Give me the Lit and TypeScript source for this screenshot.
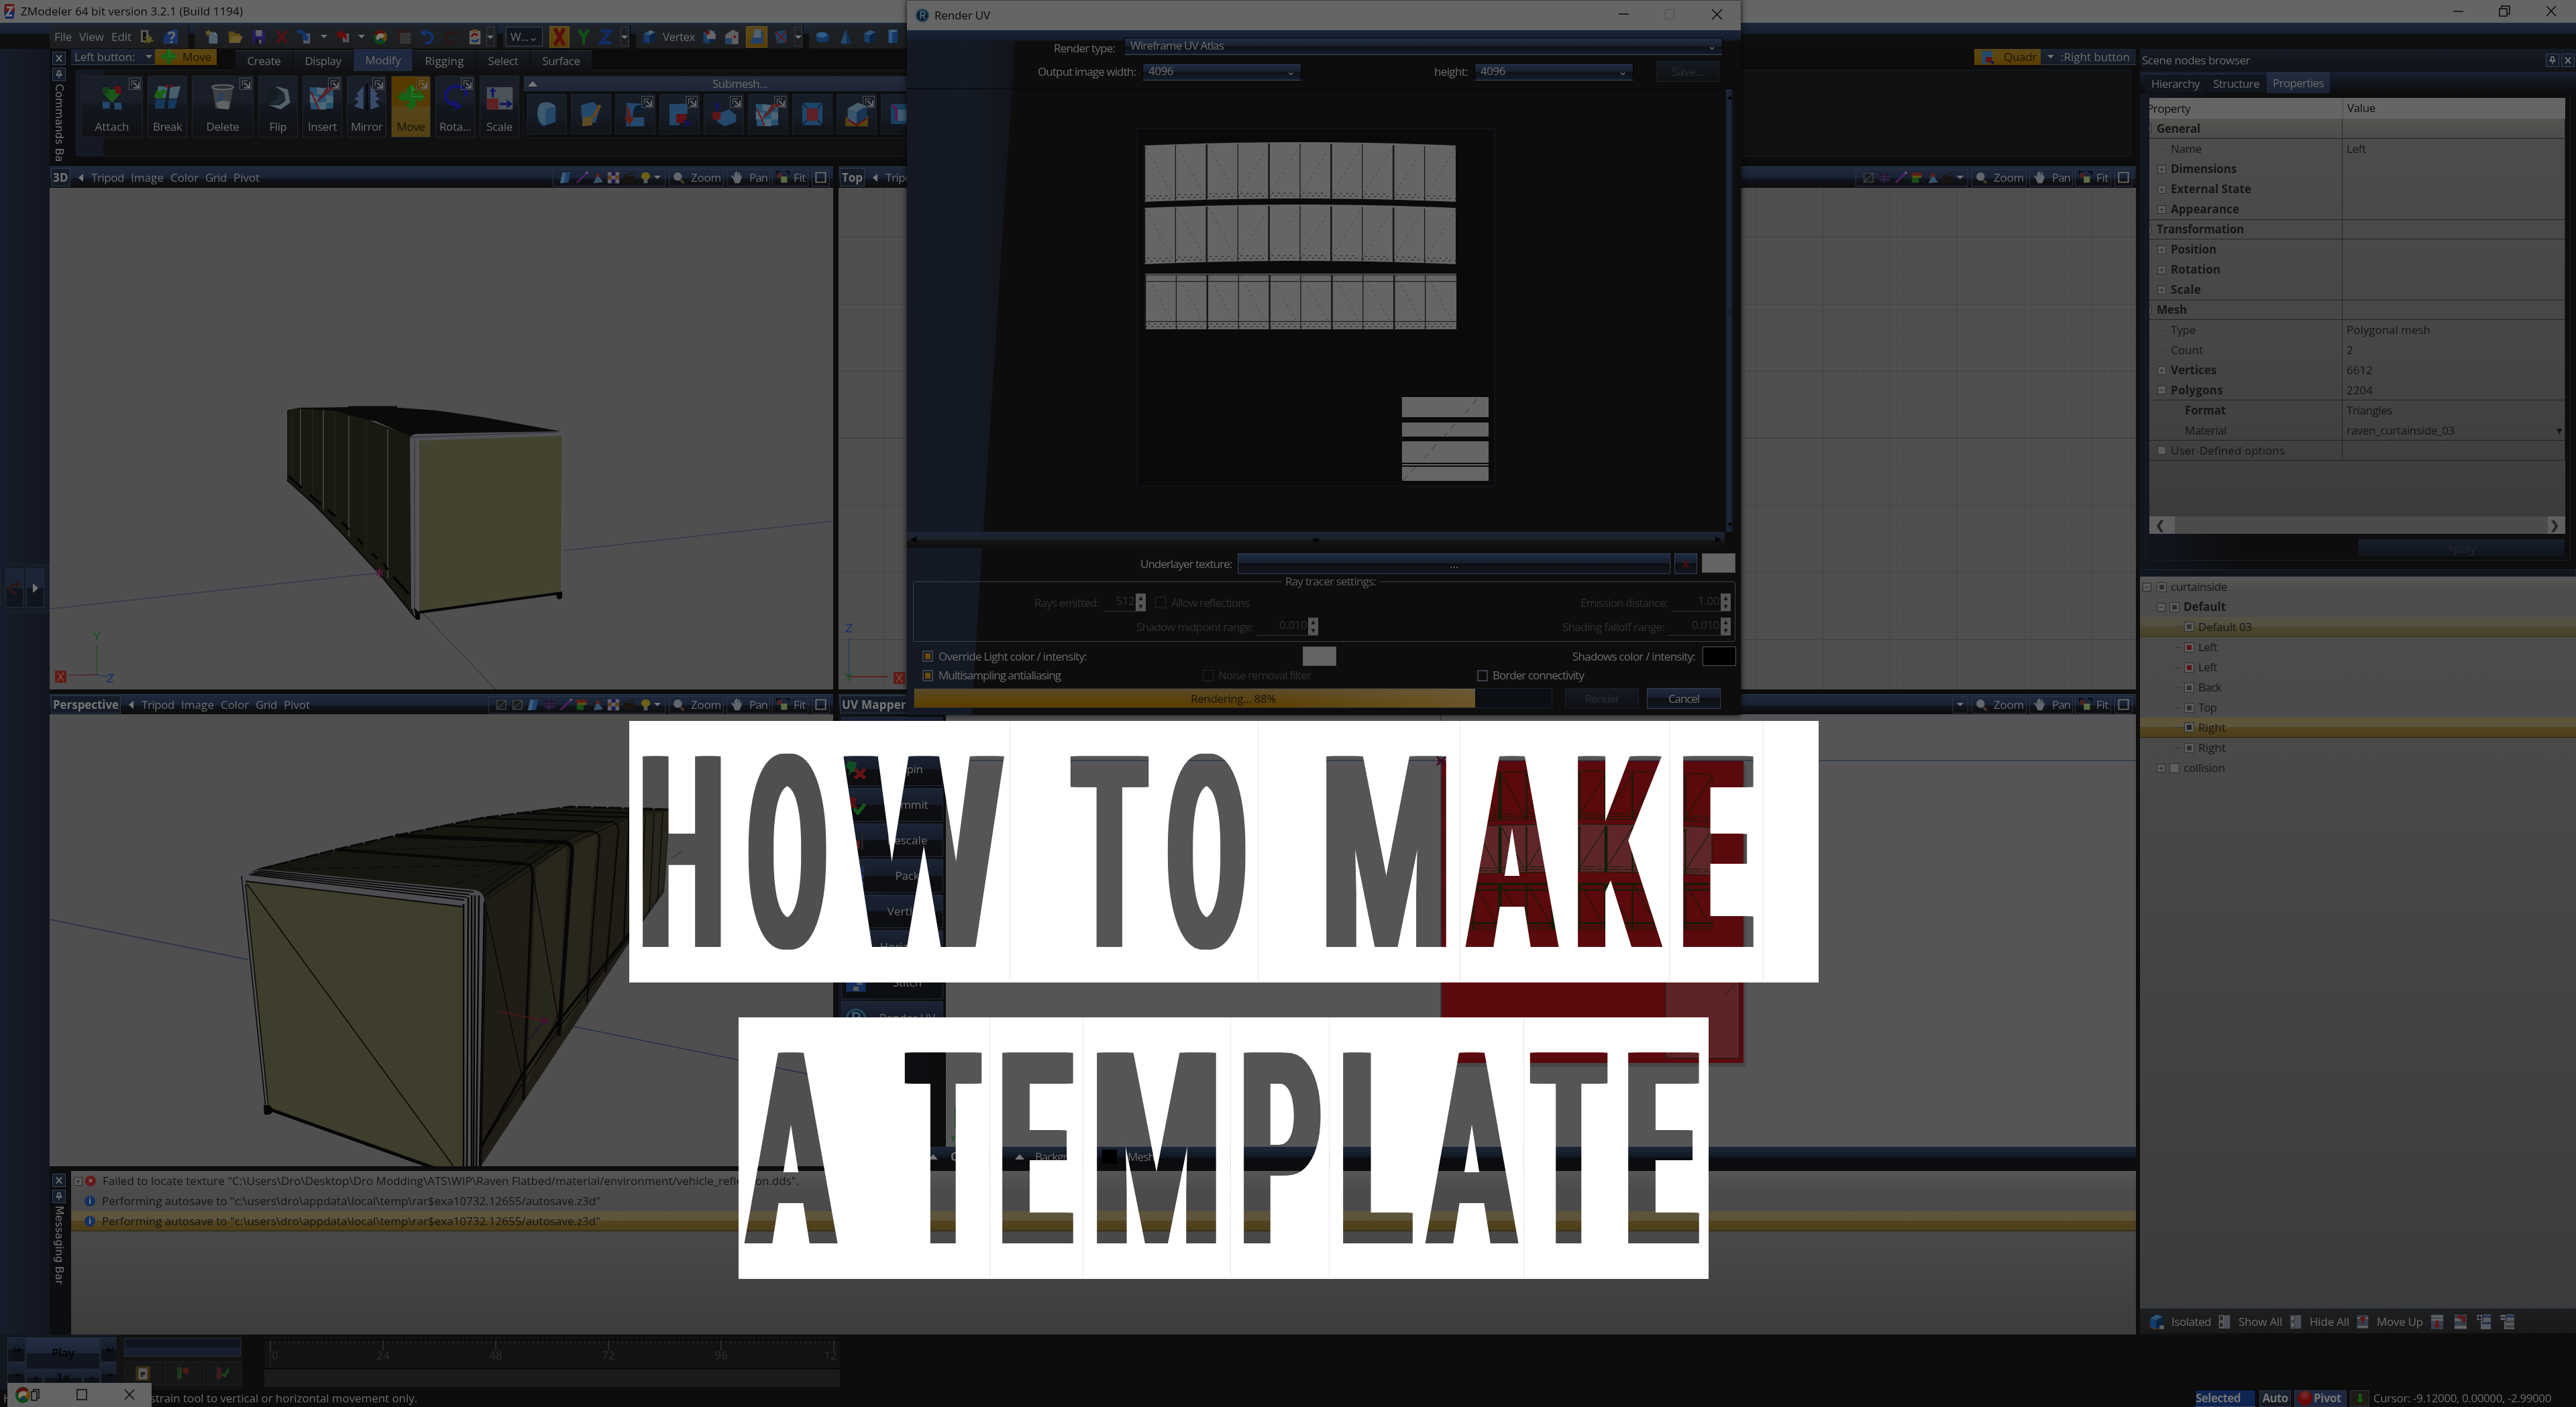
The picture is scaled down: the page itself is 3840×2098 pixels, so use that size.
import { LitElement, css, html, svg } from 'lit';
import { customElement, property } from 'lit/decorators.js';
import { classMap } from 'lit/directives/class-map.js';
import { styleMap } from 'lit/directives/style-map.js';

const ctx = document.createElement('canvas').getContext('2d')!;

// text tracked so that it fills exactly `width` pixels
const label = (text: string, width: number, size = 17, weight = 400) => {
  ctx.font = `${weight} ${size}px "Open Sans"`;
  const tracking = (width - ctx.measureText(text).width) / text.length;
  return html`<span class="t" style=${styleMap({
    width: `${width}px`,
    fontSize: `${size}px`,
    fontWeight: String(weight),
    letterSpacing: `${tracking.toFixed(3)}px`,
  })}>${text}</span>`;
};

const cube = (a = '#2c5375', b = '#193c63', c = '#0b2245') => svg`
  <path d="M4 7L13 2L21 5V17L12 22L4 19Z" fill=${b} />
  <path d="M4 7L13 2L21 5L12 10Z" fill=${a} />
  <path d="M12 10L21 5V17L12 22Z" fill=${c} />`;

const ICONS: Record<string, unknown> = {
  exit: svg`<path d="M3 2H14V20H3Z" fill="#5b5a52" /><path d="M6 5L11 4V19L6 17Z" fill="#111" /><path d="M9 13L21 18M20 12L9 21M15 9V22M7 18H22" stroke="#56501a" stroke-width="2.2" /><circle cx="15" cy="16" r="4" fill="#5c5620" />`,
  help: svg`<path d="M2 22C-1 10 8 1 22 2V22Z" fill="#1a3268" /><path d="M9 9C9 5 17 5 17 9C17 13 13 12 13 16" fill="none" stroke="#6a6a6a" stroke-width="3" /><circle cx="13" cy="20" r="1.800" fill="#6a6a6a" />`,
  new: svg`<path d="M7 5H17L21 9V22H7Z" fill="#4e5f6e" /><path d="M17 5V9H21Z" fill="#7a7f84" /><path d="M6 0L7.500 4L12 4L8.500 7L10 11L6 9L2 11L3.500 7L0 4L4.500 4Z" fill="#665a20" />`,
  open: svg`<path d="M1 4H9L11 7H20V20H1Z" fill="#5c4a18" /><path d="M6 11H24L19 21H2Z" fill="#6a5a2c" />`,
  save: svg`<path d="M2 2H20L22 4V22H2Z" fill="#241b60" /><path d="M7 2H17V11H7Z" fill="#606068" /><path d="M6 15H17V22H6Z" fill="#14131f" /><path d="M12 16H16V22H12Z" fill="#5a5a62" />`,
  cross: svg`<path d="M4 3L20 21M20 3L4 21" stroke="#5a1013" stroke-width="3.5" />`,
  import: svg`<path d="M10 7H21V22H10Z" fill="#4e5a66" /><path d="M0 2C8 1 14 4 16 11L19 10L17 18L8 16L11 13C9 9 6 7 0 6Z" fill="#10356c" />`,
  export: svg`<path d="M12 7H22V20H12Z" fill="#54595f" /><path d="M0 8L11 1V5C18 5 20 10 18 19C16 14 14 12 11 12V16Z" fill="#660c0c" />`,
  ball: svg`<circle cx="12" cy="12" r="11" fill="#0c4a16" /><path d="M12 12L2 8A11 11 0 0 1 20 5Z" fill="#5a0d0d" /><path d="M12 12L20 5A11 11 0 0 1 20 19Z" fill="#6b4510" /><path d="M6 11C6 6 18 5 18 10C18 15 8 12 9 17C4 16 5 13 6 11Z" fill="#85796a" /><circle cx="12" cy="17" r="2.500" fill="#162f65" />`,
  film: svg`<path d="M2 2H16V16H2Z" fill="#311916" /><path d="M6 6H23V22H6Z" fill="#3d3d3d" /><path d="M9 6V22M13 6V22M17 6V22M21 6V22M6 10H23M6 14H23M6 18H23" stroke="#2b2b2b" />`,
  undo: svg`<path d="M5 6C15 3 22 9 20 15C18 21 12 22 8 21" fill="none" stroke="#12326c" stroke-width="4" /><path d="M0 6L10 0V12Z" fill="#12326c" />`,
  redo: svg`<path d="M19 6C9 3 2 9 4 15C6 21 12 22 16 21" fill="none" stroke="#2b1616" stroke-width="4" /><path d="M24 6L14 0V12Z" fill="#2b1616" />`,
  reload: svg`<path d="M3 3H21V23H3Z" fill="#64615a" /><path d="M7 1H17V5H7Z" fill="#5f4a1e" /><path d="M7 12C7 7 14 7 17 10" fill="none" stroke="#650f0f" stroke-width="3" /><path d="M17 15C17 20 10 19 7 17" fill="none" stroke="#12326c" stroke-width="3" />`,
  axisX: svg`<path d="M5 2L19 22M19 2L5 22" stroke="#5c0d0d" stroke-width="5" />`,
  axisY: svg`<path d="M4 2L12 12L20 2M12 12V23" fill="none" stroke="#0e5414" stroke-width="4.5" />`,
  axisZ: svg`<path d="M5 4H19L5 20H20" fill="none" stroke="#0f2d66" stroke-width="4.5" />`,
  vert: svg`${cube()}<path d="M2 14L9 20L2 23Z" fill="#0f2a61" /><circle cx="14" cy="5" r="2.5" fill="#676767" />`,
  vertR: svg`${cube()}<path d="M9 8L15 3L21 8V15H9Z" fill="#666" /><circle cx="10" cy="6" r="3" fill="#601414" />`,
  vertW: svg`<path d="M3 9L13 2L21 6V22H3Z" fill="#606063" /><path d="M3 14H12V22H3Z" fill="#1e3f66" /><circle cx="16" cy="12" r="2" fill="#601414" />`,
  vertA: svg`<path d="M9 3H18L21 8V20H3Z" fill="#203e68" /><path d="M9 3H18V13H7Z" fill="#54606b" />`,
  vertS: svg`<path d="M3 4L20 2L21 20L6 22Z" fill="#1c4061" /><path d="M4 4L20 20M20 3L6 21" stroke="#611414" stroke-width="2" />`,
  disc: svg`<rect x="2" y="5" width="20" height="15" rx="6" fill="#133561" /><ellipse cx="11" cy="9" rx="8" ry="4" fill="#315a84" />`,
  cone: svg`<path d="M12 1L20 21Q12 24 4 21Z" fill="#24496f" /><path d="M12 1L20 21Q16 23 13 22Z" fill="#102f56" />`,
  cube: cube(),
  cylinder: svg`<path d="M5 3H19V21H5Z" fill="#143665" /><path d="M6 3H11V21H6Z" fill="#2d567e" /><ellipse cx="12" cy="3" rx="7" ry="2" fill="#41617e" />`,
  attach: svg`<path d="M3 1H8M16 1H21V6M3 23H8M16 23H21V18" fill="none" stroke="#131b28" stroke-width="2" /><path d="M4 3H10V9H4Z" fill="#184018" /><path d="M14 2H20V9H14Z" fill="#611014" /><path d="M4 16H10V22H4ZM14 17H20V23H14Z" fill="#24486a" /><path d="M12 17L5 9H9V5H15V9H19Z" fill="#1a571a" />`,
  break: svg`<path d="M4 2L12 3L10 13H2Z" fill="#416272" /><path d="M2 14H10L9 22H1Z" fill="#153a5e" /><path d="M14 3L23 2L20 13H13Z" fill="#48606c" /><path d="M13 14H20L18 22H12Z" fill="#153a5e" /><path d="M10 1L12 3M14 3L16 1" stroke="#701010" stroke-width="2" /><path d="M0 12L3 5L5 7L9 4L11 7L8 10L9 13Z" fill="#1c6114" />`,
  bin: svg`<path d="M3 2H21L18 22H6Z" fill="#3d4145" /><ellipse cx="12" cy="3" rx="9" ry="2" fill="#2b2e31" stroke="#66696c" /><path d="M6 17L12 15L18 16L17 23L8 22Z" fill="#626364" /><path d="M9 9L12 11M8 14L12 13" stroke="#1a3f70" stroke-width="2" />`,
  flip: svg`<path d="M1 7L9 2L13 10L12 16L3 18Z" fill="#151c22" /><path d="M9 2L20 5L22 17L14 23L4 19L13 19L18 15L17 8Z" fill="#53616b" /><path d="M12 10L17 9L17 14L12 18L3 18L11 14Z" fill="#1d2933" />`,
  insert: svg`<path d="M1 3L21 4V22L2 23Z" fill="#27526f" /><path d="M7 3L14 4V10L7 9ZM1 10L8 11V17H1ZM15 10L21 11V17H15ZM8 17L15 16V23H8Z" fill="#4b6676" /><path d="M2 7L9 23" stroke="#701216" stroke-width="1.200" /><path d="M6 17L16 3L23 3L10 14Z" fill="#651518" /><path d="M11 11L19 4" stroke="#3a3a3a" />`,
  mirror: svg`<path d="M9 2V23L1 20L5 16L1 13L5 11L3 9Z" fill="#394a6a" /><path d="M15 2V23L23 20L19 16L23 13L19 11L21 9Z" fill="#394a6a" /><path d="M12 0V24" stroke="#0a0a14" stroke-width="2" />`,
  move: svg`<path d="M12 0L17 6H14V8H18V5L24 12L18 17V14H16V18H17L12 24L7 18H10V15H6V17L0 12L6 6V9H8V6H7Z" fill="#176018" /><path d="M12 1L16 6H13V11H22L24 12H12Z" fill="#287a2a" />`,
  rotate: svg`<path d="M21 11C22 2 12 0 7 4C1 9 3 17 11 19" fill="none" stroke="#14146a" stroke-width="3" /><path d="M10 14L18 20L11 24L12 20L8 19Z" fill="#14146a" />`,
  scale: svg`<path d="M1 3H23V23H1Z" fill="#4b535a" /><path d="M1 13H11V23H1Z" fill="#5f2325" /><path d="M5 12V7H3L6 3L9 7H7V12M12 17H18V14L23 18L18 22V19H12" fill="#101761" />`,
  blob: svg`<path d="M6 3C12 0 17 2 20 5V19L9 23C3 20 2 9 6 3Z" fill="#24486a" /><path d="M6 3C12 0 17 2 20 5L11 8V22C4 19 2 9 6 3Z" fill="#3d596c" />`,
  brush: svg`<path d="M3 4L14 1L20 7L16 20L4 18Z" fill="#24486a" /><path d="M20 4L14 15" stroke="#5f4520" stroke-width="3" /><path d="M5 15L14 14L13 22L4 23Z" fill="#5e4c24" />`,
  detach: svg`<path d="M4 2L20 3V10H10V15H20V23H4Z" fill="#24486a" /><path d="M10 10L20 10V3L12 5Z" fill="#0d1c2c" /><path d="M4 3C8 10 8 12 8 15H11L7 22L2 15H5Z" fill="#601d14" />`,
  extrude: svg`<path d="M3 3H19V12H12V22H3Z" fill="#24486a" /><path d="M9 12H18V20H9Z" fill="#601014" /><path d="M15 17L22 19L19 24Z" fill="#11155c" />`,
  raise: svg`<path d="M6 12L17 8L23 13V19L13 23L6 19Z" fill="#24486a" /><path d="M2 10H9V17H2Z" fill="#601418" /><path d="M5 10V6H3L6 1L9 6H7V10Z" fill="#12165e" />`,
  frame: svg`<path d="M3 2H21V22H3Z" fill="#1c4669" /><path d="M3 2L21 22M21 2L3 22" stroke="#0c1d33" /><path d="M7 7H17V18H7Z" fill="#602025" />`,
  soil: svg`<path d="M2 14L10 20L22 13V23H2Z" fill="#594411" />${cube('#48606e', '#3a556a', '#173557')}<path d="M4 17L12 22L21 16" fill="none" stroke="#601010" stroke-width="1.5" />`,
  isolate: svg`<path d="M2 19L12 16L22 20L10 23Z" fill="#5a3414" />${cube('#2c5375', '#123c70', '#0b2245')}<path d="M17 17H23V22H17Z" fill="#626262" />`,
  link: svg`<path d="M3 3H21V21H3Z" fill="#174060" /><path d="M8 8H23V18H8Z" fill="#3e5d70" /><path d="M4 4L8 8V18" fill="none" stroke="#601048" stroke-width="2" />`,
  face: svg`<path d="M8 3L20 2L17 21L4 22Z" fill="#1d4470" /><path d="M8 3L13 3L10 21L4 22Z" fill="#415f7c" />`,
  edge: svg`<path d="M21 3L5 21" stroke="#57206a" stroke-width="3" /><circle cx="21" cy="3" r="2" fill="#6b5a6b" />`,
  spray: svg`<path d="M12 6L21 20L6 22Z" fill="#35536e" /><path d="M12 2L17 9L8 12Z" fill="#61201c" />`,
  checker: svg`<path d="M3 2H21V22H3Z" fill="#5b3d16" /><path d="M3 2H9V8H3ZM15 2H21V8H15ZM9 8H15V15H9ZM3 15H9V22H3ZM15 15H21V22H15Z" fill="#606070" /><path d="M9 2H15V8H9ZM9 15H15V22H9Z" fill="#191555" />`,
  clap: svg`<path d="M3 9H20V21H3Z" fill="#19140f" /><path d="M3 8L19 3" stroke="#1f1a14" stroke-width="3" />`,
  bulb: svg`<circle cx="12" cy="9" r="7" fill="#6b6014" /><path d="M9 15H15V22H9Z" fill="#5a5a5a" />`,
  wire: svg`<path d="M6 4H20V20H6ZM6 20L20 4" fill="#171a1f" stroke="#454545" stroke-width="1.5" />`,
  purple: svg`<path d="M5 5L14 2L21 6V18L11 22L5 18Z" fill="#221530" /><path d="M5 10H21M5 15H21M12 3V21" stroke="#40305a" />`,
  heat: svg`<path d="M4 3H21V8H4Z" fill="#601c12" /><path d="M6 8H20V12H6Z" fill="#5f5312" /><path d="M5 12H16V21H5Z" fill="#184f18" />`,
  page: svg`<path d="M2 2H22V22H2Z" fill="#3a2c10" /><path d="M6 5H18V20H6Z" fill="#5c5c5c" /><path d="M9 10H15V14H12V17H9Z" fill="#202020" />`,
  keyAdd: svg`<path d="M4 3H11V20H4Z" fill="#1a3a1a" /><path d="M6 0V24" stroke="#2c2c2c" /><circle cx="17" cy="8" r="5" fill="#4c1a12" />`,
  keyOk: svg`<path d="M4 3H11V20H4Z" fill="#40191a" /><path d="M6 0V24" stroke="#2c2c2c" /><path d="M12 12L16 16L22 5" fill="none" stroke="#174a1a" stroke-width="3" />`,
  zoom: svg`<circle cx="10" cy="10" r="7.5" fill="#62676c" /><path d="M15 16L21 22" stroke="#4a3a28" stroke-width="4" />`,
  hand: svg`<path d="M6 14L2 9L5 8L8 11V3H11V9V1H14V9L16 2L18 3V10L21 6V13L17 22H9Z" fill="#60666b" />`,
  fit: svg`<path d="M2 7V2H8M16 2H22V7M2 17V22" fill="none" stroke="#070707" stroke-width="2" /><path d="M3 5H11V12H3Z" fill="#50201e" /><path d="M9 10H19V20H9Z" fill="#5e6e45" />`,
  max: svg`<path d="M3 3H21V21H3Z" fill="none" stroke="#6a6a6a" stroke-width="2.5" />`,
  pin: svg`<path d="M9 3H15V11H18V14H6V11H9ZM12 14V22" fill="none" stroke="#777" stroke-width="2.5" />`,
  x: svg`<path d="M5 4L19 20M19 4L5 20" stroke="#777" stroke-width="3" />`,
  listUp: svg`<path d="M3 1H21V23H3Z" fill="#343f4e" /><path d="M3 6H21M3 20H21" stroke="#646464" stroke-width="3" /><path d="M12 2L18 8H14V14H10V8H6Z" fill="#621318" />`,
  listDn: svg`<path d="M3 1H21V23H3Z" fill="#343f4e" /><path d="M3 4H21M3 9H21" stroke="#646464" stroke-width="3" /><path d="M12 22L18 16H14V10H10V16H6Z" fill="#621318" />`,
  listIn: svg`<path d="M3 1H21V23H3Z" fill="#343f4e" /><path d="M3 20H21M3 9H12" stroke="#646464" stroke-width="4" /><path d="M6 4L12 1V3H19V14H15V7H12V9Z" fill="#621318" />`,
  listPl: svg`<path d="M7 1H22V23H7Z" fill="#545b63" /><path d="M9 4H22M9 14H22" stroke="#1b2c4c" stroke-width="3" /><path d="M1 1H10V10H1Z" fill="#666" stroke="#111" /><path d="M5.500 2.500V8.500M2.500 5.500H8.500" stroke="#113" stroke-width="2" />`,
  listMi: svg`<path d="M7 1H22V23H7Z" fill="#545b63" /><path d="M9 4H22" stroke="#1b2c4c" stroke-width="3" /><path d="M9 12H22M9 19H22" stroke="#3c3c3c" stroke-width="3" /><path d="M1 1H10V10H1Z" fill="#666" stroke="#111" /><path d="M2.500 5.500H8.500" stroke="#113" stroke-width="2" />`,
  show: svg`<path d="M3 1H21V23H3Z" fill="#4b5058" /><path d="M4 2H10V10H4ZM4 13H10V21H4Z" fill="#222" stroke="#777" />`,
  hide: svg`<path d="M3 1H21V23H3Z" fill="#4b5058" /><path d="M4 2H10V10H4ZM4 13H10V21H4Z" fill="#686868" stroke="#222" />`,
  pinX: svg`<path d="M3 2L13 4L11 12L15 16L7 15L3 21L5 13L1 9Z" fill="#0f4f26" /><path d="M11 12L22 23M22 12L11 23" stroke="#671313" stroke-width="4" />`,
  pinV: svg`<path d="M3 2L13 4L11 12L15 16L7 15L3 21L5 13L1 9Z" fill="#5c1015" /><path d="M10 16L14 22L22 11" fill="none" stroke="#17561a" stroke-width="4" />`,
  rule: svg`<path d="M2 12H16V22H2Z" fill="#571b1b" /><path d="M19 1V23" stroke="#262626" stroke-width="2" />`,
  stack: svg`<path d="M13 1H21V8H13ZM13 10H21V16H13ZM13 18H21V23H13Z" fill="#1b2c58" /><path d="M3 10H11V16H3Z" fill="#1b2c58" />`,
  grid: svg`<path d="M1 1H23V23H1Z" fill="#132d5c" /><path d="M9 3H15V8H9ZM13 10H19V15H13ZM9 17H15V22H9Z" fill="#575757" />`,
  ruv: svg`<circle cx="12" cy="12" r="10" fill="#0c1824" stroke="#26485e" stroke-width="2.5" /><path d="M9 18V6H13C17 6 17 12 13 12H9M13 12L16 18" fill="none" stroke="#3e5d70" stroke-width="2.5" />`,
  none: svg``,
};

const icon = (name: string, w = 24, h = w) => html`
  <svg class="icon" width=${w} height=${h} viewBox="0 0 24 24" preserveAspectRatio="none">${ICONS[name]}</svg>`;

const range = (n: number) => Array.from({length: n}, (_, i) => i);

// one unwrapped curtain: panels side by side with a small bow along the top
const uvStrip = (x: number, y: number, w: number, h: number, bow: number, fill: string, line: string, lw = 1) => {
  const top = (t: number) => y + bow * (2 * t - 1) ** 2;
  const pts = range(21).map(i => `${x + w * i / 20},${top(i / 20)}`);
  const back = range(21).reverse().map(i => `${x + w * i / 20},${top(i / 20) + h}`);
  return svg`
    <polygon points="${[...pts, ...back].join(' ')}" fill=${fill} stroke=${lw > 1 ? line : 'none'} />
    ${range(10).map(i => {
      const x0 = x + w * i / 10;
      const x1 = x0 + w / 10;
      const y0 = top((i + 0.5) / 10);
      const flip = bow && i > 2;
      return svg`
        <path d="M${x0} ${y0 + 2}V${y0 + h}" stroke=${line} stroke-width=${(i % 2 ? 1.2 : 2.5) * lw} />
        <path d="M${flip ? x1 : x0 + 3} ${y0 + 4}L${flip ? x0 : x1 - 3} ${y0 + h - 6}" stroke=${line} stroke-width=${0.6 * lw} stroke-dasharray=${lw > 1 ? 'none' : '2 6'} />
        <path d="M${x0} ${y0 + h - 4}H${x1}M${x0 + 4} ${y0 + h - 8}H${x1 - 6}" stroke=${line} stroke-dasharray=${lw > 1 ? '22 3' : '3 6'} />`;
    })}
    ${bow ? svg`` : svg`<path d="M${x} ${y + h * 0.14}H${x + w}M${x} ${y + h * 0.86}H${x + w}M${x} ${y + 2}H${x + w}" stroke=${line} stroke-width=${lw > 1 ? 2 : 1} />`}`;
};

type Glyph = [string, number, number];

// big cut-out caption, [letter, left, right] measured from the plate's left edge
@customElement('zm-caption')
export class Caption extends LitElement {
  static styles = css`
    :host {
      display: block;
      height: 390px;
      background-color: #fff;
      mix-blend-mode: screen;
      overflow: hidden;
      position: relative;
    }
    .line {
      margin: 0;
      display: flex;
      height: 390px;
      color: #000;
      font: 700 400px/400px Roboto, sans-serif;
      white-space: pre;
    }
    .cell {
      height: 390px;
      flex: none;
    }
    .glyph {
      display: block;
      width: 0;
      transform-origin: 0 0;
    }
    .seam {
      position: absolute;
      top: 0;
      width: 1px;
      height: 388px;
      background-color: #dcdcdc;
    }
  `;

  @property({attribute: false})
  glyphs: Glyph[] = [];

  @property({attribute: false})
  seams: number[] = [];

  glyph([ch, left, right]: Glyph, i: number) {
    const next = this.glyphs[i + 1];
    const start = i ? left : 0;
    const width = (next ? next[1] : right) - start;
    ctx.font = '700 400px Roboto';
    const m = ctx.measureText(ch);
    const fat = 6;
    const ink = m.actualBoundingBoxRight + m.actualBoundingBoxLeft;
    const k = (right - left - fat * 2) / ink;
    const dx = left - start + fat + m.actualBoundingBoxLeft * k;
    const s = fat / k;
    return html`<span class="cell" style=${styleMap({width: `${width}px`})}><span class="glyph" style=${styleMap({
      transform: `translate(${dx}px, 1px) scaleX(${k})`,
      textShadow: `${s}px 0 #000, ${-s}px 0 #000, ${s / 2}px 0 #000, ${-s / 2}px 0 #000`,
    })}>${ch}</span></span>`;
  }

  render() {
    return html`
      <h1 class="line">${this.glyphs.map((g, i) => this.glyph(g, i))}</h1>
      ${this.seams.map(x => html`<i class="seam" style=${styleMap({left: `${x}px`})}></i>`)}
    `;
  }
}

const LINE1: Glyph[] = [
  ['H', 20, 139], ['O', 176, 295], ['W', 319, 559], ['T', 657, 776], ['O', 801, 920],
  ['M', 1039, 1218], ['A', 1246, 1386], ['K', 1414, 1543], ['E', 1571, 1677],
];
const LINE2: Glyph[] = [
  ['A', 8, 148], ['T', 247, 364], ['E', 393, 500], ['M', 534, 712], ['P', 753, 868],
  ['L', 901, 1007], ['A', 1023, 1163], ['T', 1179, 1297], ['E', 1326, 1433],
];

const MAIN_ICONS: [string, number][] = [
  ['new', 35], ['open', 35], ['save', 35], ['cross', 34], ['import', 34], ['drop', 23], ['export', 34], ['drop', 22],
  ['ball', 34], ['film', 35], ['undo', 35], ['redo', 36], ['reload', 35],
];

const TABS: [string, number, number][] = [
  ['Create', 86, 50], ['Display', 90, 54], ['Modify', 89, 53], ['Rigging', 94, 58], ['Select', 81, 45], ['Surface', 92, 56],
];

const COMMANDS: [string, string, number, number, boolean][] = [
  ['Attach', 'attach', 92, 51, true], ['Break', 'break', 59, 43, false], ['Delete', 'bin', 92, 49, true],
  ['Flip', 'flip', 59, 26, false], ['Insert', 'insert', 59, 43, true], ['Mirror', 'mirror', 59, 47, true],
  ['Move', 'move', 59, 42, true], ['Rota...', 'rotate', 59, 47, true], ['Scale', 'scale', 59, 39, false],
];

const SUBMESH: [string, boolean][] = [
  ['blob', false], ['brush', false], ['detach', true], ['extrude', true], ['raise', true], ['insert', true],
  ['frame', false], ['soil', true], ['link', false],
];

// name, value, kind, indent, name width, value width
const PROPS: [string, string, string, number, number, number][] = [
  ['General', '', 'group', 0, 65, 0],
  ['Name', 'Left', '', 1, 46, 29],
  ['Dimensions', '', 'plus', 1, 98, 0],
  ['External State', '', 'plus', 1, 120, 0],
  ['Appearance', '', 'plus', 1, 102, 0],
  ['Transformation', '', 'group', 0, 130, 0],
  ['Position', '', 'plus', 1, 68, 0],
  ['Rotation', '', 'plus', 1, 74, 0],
  ['Scale', '', 'plus', 1, 45, 0],
  ['Mesh', '', 'group', 0, 45, 0],
  ['Type', 'Polygonal mesh', '', 1, 37, 125],
  ['Count', '2', '', 1, 48, 9],
  ['Vertices', '6612', 'plus', 1, 68, 39],
  ['Polygons', '2204', 'minus', 1, 78, 39],
  ['Format', 'Triangles', 'bold', 2, 61, 68],
  ['Material', 'raven_curtainside_03', 'last', 2, 62, 161],
  ['User-Defined options', '', 'check', 1, 170, 0],
];

// name, width, depth, expander, box colour, row state
const TREE: [string, number, number, string, string, string][] = [
  ['curtainside', 84, 0, '−', '#2e2e2e', ''],
  ['Default', 63, 1, '−', '#2e2e2e', 'bold'],
  ['Default 03', 80, 2, '', '#33332a', 'soft'],
  ['Left', 28, 2, '', '#591114', ''],
  ['Left', 28, 2, '', '#591114', ''],
  ['Back', 34, 2, '', '#2e2e2e', ''],
  ['Top', 27, 2, '', '#2e2e2e', ''],
  ['Right', 41, 2, '', '#1f1f26', 'hot'],
  ['Right', 41, 2, '', '#2e2e2e', ''],
  ['collision', 62, 1, '+', '#606060', ''],
];

const MAPPER: [string, string, number][] = [
  ['Pin', 'pinV', 26], ['Unpin', 'pinX', 46], ['Commit', 'pinV', 62], ['Rescale', 'rule', 60], ['Pack', 'stack', 36],
  ['Vertical', 'none', 60], ['Horizontal', 'none', 82], ['Stitch', 'grid', 43], ['Render UV', 'ruv', 83],
];

@customElement('app-root')
export class AppRoot extends LitElement {
  static styles = css`
    :host {
      display: block;
      width: 3840px;
      height: 2098px;
      overflow: hidden;
      position: relative;
      isolation: isolate;
      background-color: #0d0d0d;
      color: #6c6c6c;
      font: 17px/22px "Open Sans", "Noto Sans", sans-serif;
    }
    * { box-sizing: border-box; }
    i { font-style: normal; }
    .t { display: inline-block; white-space: pre; flex: none; }
    .icon { display: block; flex: none; }
    .row { display: flex; align-items: center; gap: 10px; }
    .grow { flex: 1; }
    .drop {
      width: 0;
      height: 0;
      flex: none;
      border: 5px solid transparent;
      border-top-color: #777;
      border-bottom: 0;
    }
    .drop.left { border: 6px solid transparent; border-right: 7px solid #777; border-left: 0; }
    .drop.up { border: 7px solid transparent; border-bottom: 8px solid #777; border-top: 0; }

    .titlebar {
      display: flex;
      align-items: center;
      height: 34px;
      background-color: #656565;
      color: #0a0a0a;
    }
    .logo { margin: 0 8px 0 5px; }
    .winbtns { margin: -2px 28px 0 auto; }

    .toolbar {
      display: flex;
      height: 39px;
      padding: 3px 0 1px 74px;
      background: linear-gradient(#1b2839, #151e2c 16px, #0f0f10 17px);
    }
    .group {
      display: flex;
      align-items: center;
      height: 35px;
      padding-left: 8px;
      margin-right: 8px;
      background: linear-gradient(#1d222a, #1c1c1d);
      border-right: 1px solid #090909;
    }
    .group.menus { width: 208px; gap: 11px; padding-left: 7px; }
    .group.tools { width: 452px; }
    .group.axes { width: 190px; gap: 10px; padding-left: 4px; }
    .group.verts { width: 250px; gap: 8px; }
    .group.prims { width: 400px; gap: 11px; }
    .tool { display: flex; justify-content: center; flex: none; }
    .gold { background: linear-gradient(#5a4516, #5e450b 50%, #583c00); border: 1px solid #6a5526; }
    .gold .icon { margin: 0 2px; }
    .more { width: 12px; height: 29px; border: 1px solid #33373e; margin-left: auto; margin-right: 4px; padding-top: 18px; }
    .wsel {
      display: flex;
      align-items: center;
      justify-content: space-between;
      width: 60px;
      height: 29px;
      padding: 0 6px;
      background: #10151e;
      border: 1px solid #3c4350;
    }

    .main { display: flex; height: 1917px; }
    .side {
      width: 74px;
      background: linear-gradient(90deg, #161c29, #121620);
      padding-top: 768px;
    }
    .sidebtn {
      display: flex;
      gap: 4px;
      height: 72px;
      padding: 6px 7px;
      background-color: #151b27;
      border: 1px solid #1c2330;
    }
    .sidebtn div { flex: 1; display: flex; align-items: center; justify-content: center; border: 1px solid #232c3b; background: linear-gradient(#1a2434 49%, #10141d 50%); }
    .play { width: 0; height: 0; border: 7px solid transparent; border-left: 8px solid #777; border-right: 0; }
    .center { width: 3110px; margin-right: 6px; background-color: #0c0c0d; }

    .commands { display: flex; height: 175px; }
    .strip { width: 32px; padding: 4px 4px 0; background-color: #0c0d10; }
    .mini { display: flex; align-items: center; justify-content: center; width: 20px; height: 20px; margin-bottom: 4px; border: 1px solid #3a4251; background-color: #151d2b; }
    .vtext { writing-mode: vertical-rl; margin: 4px 0 0 -1px; font: 16px/22px "DejaVu Sans", sans-serif; color: #747474; white-space: pre; }
    .cmdbody { flex: 1; }
    .cmdtop { display: flex; height: 31px; }
    .bind { display: flex; align-items: center; gap: 16px; height: 24px; padding-left: 5px; background: linear-gradient(#1a2332, #151c29); border-bottom: 1px solid #39414e; }
    .bind .gold { display: flex; align-items: center; gap: 6px; height: 24px; padding: 0 6px; color: #16130c; border: 0; }
    .bind.l { width: 217px; margin-right: 28px; }
    .bind.l .gold { margin-left: -12px; width: 92px; }
    .bind.r { width: 241px; padding: 0; gap: 10px; margin-left: auto; }
    .bind.r .gold { width: 99px; gap: 10px; }
    .tab { display: flex; justify-content: center; align-items: center; height: 31px; margin-top: 2px; background: linear-gradient(#161a21, #101113); border-top: 1px solid #272e39; border-right: 1px solid #090909; }
    .tab.on { margin-top: 0; height: 33px; background: linear-gradient(#1d2740, #202a3e); }
    .ribbon { display: flex; gap: 7px; width: 3064px; height: 129px; margin-left: 7px; padding: 8px 7px; border: 1px solid #161c2b; background: linear-gradient(90deg, #141924 40px, #101010 41px); }
    .cmd { position: relative; height: 92px; padding-top: 11px; text-align: center; background: linear-gradient(#191e28 40%, #12161e 50%, #101114); border: 1px solid #20262e; flex: none; }
    .cmd .icon { margin: 0 auto 13px; }
    .cmd.gold { color: #15120a; background: linear-gradient(#573b00, #553a06 49%, #58451a 50%, #524010); }
    .cmd.gold .icon { margin: 0 auto 13px; }
    .corner { position: absolute; right: 2px; top: 2px; width: 18px; height: 18px; border: 1px solid #4b4f55; }
    .corner::before { content: ""; position: absolute; left: 3px; top: 3px; width: 7px; height: 7px; border: solid #686868; border-width: 1.5px 0 0 1.5px; }
    .corner::after { content: ""; position: absolute; left: 6px; top: 6px; width: 7px; height: 7px; border: solid #686868; border-width: 0 2px 2px 0; background: linear-gradient(45deg, transparent 42%, #686868 42% 58%, transparent 58%); transform: scale(1); }
    .submesh { width: 800px; height: 93px; margin-left: -1px; border: 1px solid #171b22; background-color: #0d0e10; }
    .subhead { display: flex; align-items: center; height: 22px; padding-left: 6px; background: linear-gradient(#242c3d, #1e2535); }
    .subhead .t { margin-left: 261px; }
    .subicons { display: flex; gap: 6px; padding: 4px 4px; }
    .sub { position: relative; width: 60px; height: 60px; padding: 9px; background: linear-gradient(#171d27 49%, #101217); border: 1px solid #1d222b; flex: none; }

    .views { display: grid; grid-template-columns: 1168px 1934px; column-gap: 8px; }
    .vp { display: flex; flex-direction: column; }
    .vhead { display: flex; align-items: center; height: 32px; padding: 0 5px 0 2px; background: linear-gradient(#1e293d, #192336 50%, #101319 60%, #0b0c0e); border-top: 1px solid #2b3444; flex: none; }
    .vhead > .drop.left { margin: 0 12px; }
    .low .vhead { height: 30px; }
    .low { margin-top: 7px; }
    .name { font-weight: 700; height: 27px; padding: 2px 2px; border: 1px solid #30394a; background: #151c28; color: #767676; }
    .vicons { display: flex; align-items: center; gap: 1px; height: 26px; margin-left: auto; padding: 0 6px; border: 1px solid #2c3442; }
    .vbtn { display: flex; align-items: center; justify-content: space-between; width: 82px; height: 26px; padding: 0 3px 0 4px; margin-left: 5px; border: 1px solid #2c3442; }
    .vbtn.pan { width: 65px; margin-left: 4px; }
    .vbtn.fit { width: 54px; margin-left: 3px; }
    .vbtn.max { width: 27px; padding: 0 3px; }
    .canvas { display: block; background-color: #4f4f4f; }
    .gridbg {
      height: 748px;
      background-color: #4f4f4f;
      background-image:
        linear-gradient(#2d3c45 0 0),
        linear-gradient(90deg, #444 1px, transparent 1px), linear-gradient(#3f4444 1px, transparent 1px),
        linear-gradient(90deg, #4c4c4c 1px, transparent 1px), linear-gradient(#4c4c4c 1px, transparent 1px);
      background-size: 100% 1px, 100px 100px, 100px 100px, 10px 10px, 10px 10px;
      background-position: 0 373px, 67px 0, 0 73px, 7px 0, 0 3px;
      background-repeat: no-repeat, repeat, repeat, repeat, repeat;
    }
    .mapper { display: grid; grid-template-columns: 160px 1fr; grid-template-rows: 645px 29px; }
    .mapside { display: flex; flex-direction: column; gap: 3px; padding: 4px 4px; background: linear-gradient(90deg, #11151e, #0b0b0c); overflow: hidden; }
    .mapbtn { display: flex; align-items: center; height: 50px; padding-left: 5px; background: linear-gradient(#1b2436, #151b28 49%, #0d0f13 50%, #0c0d0f); border: 1px solid #232b3a; flex: none; }
    .mapbtn .grow { text-align: center; padding-left: 8px; }
    .mapfoot { grid-column: 1 / 3; display: flex; align-items: center; gap: 16px; padding-left: 134px; background: linear-gradient(#1d2739, #121924 49%, #0b0c0f 60%); }
    .mapfoot .bold { width: 80px; font-weight: 700; margin-left: 3px; }
    .swatchk { width: 22px; height: 21px; background-color: #000; margin-left: 0; }

    .messages { display: flex; height: 244px; margin-top: 7px; }
    .list { flex: 1; background: linear-gradient(#575553, #4c4b4b 30px, #4a4a4a 80px, #3c3c3c); color: #141414; }
    .msg { display: flex; align-items: center; gap: 10px; height: 30px; padding-left: 20px; }
    .msg.first { padding-left: 4px; gap: 4px; }
    .msg.first .t { margin-left: 6px; }
    .msg.hot, .trow.hot { background: linear-gradient(#5f5437, #5b543f 49%, #544420 50%, #4b3e18); border-bottom: 1px solid #262012; }
    .dot { display: grid; place-items: center; width: 16px; height: 16px; border-radius: 50%; background-color: #15305f; color: #888; font: 700 12px/14px "Open Sans", sans-serif; }
    .dot.err { background-color: #651a1a; }
    .plus { display: grid; place-items: center; width: 13px; height: 13px; border: 1px solid #2b2b2b; background-color: #5c5c5c; color: #1b1b1b; font: 12px/11px "Open Sans", sans-serif; flex: none; }

    .right { width: 650px; background: linear-gradient(90deg, #11151e, #0d0d0e 160px); }
    .rhead { display: flex; align-items: center; gap: 3px; height: 34px; padding: 0 2px 0 3px; background: linear-gradient(#151b26, #101216); }
    .rhead .t { margin-right: auto; }
    .rhead .mini { margin: 0; }
    .rtabs { display: flex; gap: 2px; height: 32px; padding-left: 8px; background: linear-gradient(#172033, #0f131b 18px, #0c0c0d); }
    .rtab { display: grid; place-items: center; height: 28px; margin-top: 3px; border-top: 1px solid #232c3a; background-color: #11151d; padding: 0 9px; }
    .rtab.on { margin: 0; height: 32px; background: linear-gradient(#222d40, #1a2333); }
    .rbox { height: 697px; margin: 0 8px; padding: 7px 7px 0 5px; border: 1px solid #171e2b; border-top: 0; background: linear-gradient(90deg, #11161f, #0d0d0e 130px); }
    .ptable { height: 624px; background: linear-gradient(#575552, #575552 30px, #4c4c4c 60px, #464646 60%, #3b3b3b); color: #151515; overflow: hidden; }
    .phead { display: grid; grid-template-columns: 288px 1fr; height: 31px; align-items: center; background-color: #656565; color: #0c0c0c; }
    .phead > :first-child { margin-left: -4px; }
    .phead > :last-child { padding-left: 6px; height: 31px; padding-top: 4px; border-left: 1px solid #4c4c4c; }
    .prow { display: grid; grid-template-columns: 288px 1fr; height: 30px; }
    .pcell { display: flex; align-items: center; gap: 7px; border-right: 1px solid #242424; padding-left: 12px; }
    .pcell.i2 { padding-left: 53px; }
    .pcell.leaf1 { padding-left: 32px; }
    .pcell.leaf1::before { content: ""; width: 8px; height: 1px; background-color: #333a44; margin: 0 -3px 0 -12px; }
    .pval { display: flex; align-items: center; justify-content: space-between; padding: 0 3px 0 6px; border-right: 1px solid #242424; }
    .prow.sect .pcell { padding-left: 0; gap: 8px; }
    .prow.sect .plus { margin-left: -10px; }
    .prow.sect, .prow.edge { border-bottom: 1px solid #232323; }
    .prow.line { border-top: 1px solid #232323; }
    .hscroll { display: flex; align-items: center; justify-content: space-between; height: 26px; padding: 0 9px; background: linear-gradient(90deg, #5f5f5f 38px, #4b4b4b 38px 594px, #5f5f5f 594px); color: #222; }
    .apply { width: 310px; height: 28px; margin: 7px 0 0 auto; text-align: center; color: #25282d; border: 1px solid #0a0a0a; background: linear-gradient(#161e2c, #0f131a); padding-top: 3px; }
    .splitter { height: 11px; margin: 13px 0 0 1px; border: 1px solid #1d2839; background: #10151d; }
    .tree { height: 1091px; background: linear-gradient(#5a5856, #4d4c4c 20px, #4b4b4b 150px, #3b3b3b); color: #151515; }
    .trow { display: flex; align-items: center; gap: 6px; height: 30px; }
    .trow.soft { background: linear-gradient(#555244, #524f3f 49%, #4c4730 50%, #474128); border-bottom: 1px solid #3a3520; }
    .d0 { padding-left: 4px; gap: 8px; }
    .d0 .t { margin-left: -2px; }
    .d1 { padding-left: 25px; }
    .d2 { padding-left: 52px; }
    .d2::before { content: ""; width: 10px; height: 1px; background-color: #2b3848; margin-right: -2px; }
    .box { width: 15px; height: 15px; border: 1px solid #303030; box-shadow: inset 0 0 0 3px #5c5c5c; }
    .rfoot { display: flex; align-items: center; height: 37px; padding-left: 11px; gap: 10px; background: linear-gradient(#1d1e20, #191919); border-top: 2px solid #1a222e; }
    .rfoot .t { margin-right: -1px; }
    .rfoot .tail { display: flex; gap: 11px; }

    .bottom { display: flex; flex-direction: column; height: 108px; background-color: #0c0c0c; }
    .transport { display: flex; height: 82px; }
    .player { display: grid; grid-template-columns: 27px 25px 58px 25px 27px; grid-template-rows: 37px 10px 24px; width: 174px; padding: 4px 0 0 11px; gap: 1px; background-color: #11161f; }
    .pb { display: grid; place-items: center; background: linear-gradient(#1b2535, #161d2a 49%, #0d1118 50%); border: 1px solid #252e3d; color: #070707; font: 700 11px/14px "DejaVu Sans", sans-serif; letter-spacing: -2px; }
    .pb.big { grid-column: 2 / 5; grid-row: 1 / 3; font: 17px/22px "Open Sans", sans-serif; background: linear-gradient(#222e42, #1c2638 49%, #10151f 50%); }
    .pb.back { grid-area: 2 / 1 / 4 / 2; }
    .pb.slow { grid-area: 3 / 2; }
    .pb.rate { grid-area: 3 / 3; font-size: 15px; letter-spacing: 0; }
    .pb.fast { grid-area: 3 / 4; }
    .pb.fwd { grid-area: 2 / 5 / 4 / 6; }
    .keys { display: grid; grid-template-columns: 56px 56px 56px; grid-template-rows: 28px 36px; gap: 7px 3px; width: 188px; padding: 5px 0 0 11px; background-color: #121212; }
    .combo2 { grid-column: 1 / 4; border: 1px solid #232d3d; background: linear-gradient(#0f141e 50%, #171f2e 50%); }
    .key { display: grid; place-items: center; background-color: #151618; border: 1px solid #1c1d20; }
    .timeline { width: 858px; margin-left: 32px; }
    .status { display: flex; align-items: center; height: 26px; padding-left: 5px; }
    .sbtn { display: grid; place-items: center; height: 25px; border: 1px solid #2b3340; font-weight: 700; background: linear-gradient(#1c2433, #12161e); color: #747474; }
    .sbtn.sel { width: 91px; margin-left: auto; padding: 0; background: #0e2450; }
    .sbtn.auto { width: 47px; margin: 0 5px; }
    .sbtn.piv { display: flex; gap: 2px; align-items: center; width: 78px; margin-right: 5px; background: #1c2640; padding: 0 4px; }
    .sbtn.arr { width: 29px; background: #1d1b13; margin-right: 6px; color: #175a17; }
    .red { width: 22px; height: 22px; border-radius: 50%; background: radial-gradient(circle at 50% 25%, #77302f, #650808 50%); }
    .status > .cur { margin-right: 37px; display: flex; }
    .task { position: absolute; left: 11px; top: 2062px; width: 215px; height: 36px; background-color: #646464; display: flex; align-items: center; padding-left: 11px; }

    .dialog { position: absolute; left: 1352px; top: 0; width: 1243px; height: 1066px; background: #0d0d0d; box-shadow: 0 0 8px #060606; border-top: 1px solid #3c3c3c; }
    .band { position: absolute; left: 0; top: 45px; width: 162px; height: 1020px; clip-path: polygon(0 0, 100% 0, 96px 100%, 0 100%); background: linear-gradient(90deg, #131823, #141a25 90px, #11141a); }
    .dbody { position: relative; }
    .dtitle { display: flex; align-items: center; height: 44px; padding: 0 0 0 12px; background-color: #656565; color: #080808; }
    .dtitle .icon:first-child { margin-right: 7px; }
    .dtitle .winbtns { margin-right: 25px; }
    .dform { height: 88px; padding-top: 11px; background: linear-gradient(#19253a, #141c2a 15px, transparent 16px); border-bottom: 1px solid #050505; }
    .f1 { display: grid; grid-template-columns: 91px 892px; column-gap: 14px; padding-left: 219px; }
    .f1 > .t { padding-top: 5px; }
    .f2 { display: grid; grid-template-columns: 146px 247px 198px 50px 247px 41px 94px; padding-left: 195px; margin-top: 8px; align-items: center; }
    .f2 .sel { margin-left: 10px; }
    .f2 .dbtn { margin-left: -7px; margin-right: 7px; }
    .sel { display: flex; align-items: center; justify-content: space-between; height: 26px; padding: 0 8px 2px; border: 1px solid #000; border-bottom-color: #414b5c; background: linear-gradient(#202c42, #18202f 49%, #0e1014 50%, #141c2b); }
    .dbtn { display: grid; place-items: center; height: 31px; border: 1px solid #374153; background: linear-gradient(#1f2a40, #161d2b 49%, #0d0e11 50%, #111722); color: #727272; }
    .dbtn.off { color: #2b2f35; border-color: #1a1f28; background: linear-gradient(#141923, #0e1013); }
    .stage { display: flex; height: 660px; }
    .vscroll { width: 12px; margin: 0 10px 0 auto; background: linear-gradient(90deg, #1b2638 8px, #101112 9px); display: flex; flex-direction: column; justify-content: space-between; align-items: center; font-size: 11px; color: #000; }
    .dscroll { display: flex; justify-content: space-between; height: 24px; width: 1219px; padding: 0 5px; background: linear-gradient(#1a2538, #1c1f26 12px, #141414 13px, #0d0d0d); color: #000; font-size: 12px; }
    .under { display: grid; grid-template-columns: 136px 646px 34px 50px; column-gap: 7px; padding: 8px 0 0 348px; height: 41px; }
    .under > .t { padding-top: 5px; }
    .under > :nth-child(2) { margin-left: 2px; margin-right: -1px; }
    .sw { height: 29px; background-color: #646464; border: 1px solid #555; }
    .sw.dark { background-color: #000; }
    .rays { position: relative; height: 90px; margin: 9px 8px 0 9px; border: 1px solid #3b4150; border-radius: 3px; color: #303030; }
    .legend { position: absolute; left: 548px; top: -12px; padding: 0 6px; background-color: #0d0d0d; color: #5d5d5d; }
    .r1 { display: grid; grid-template-columns: 96px 70px 14px 116px 518px 130px 94px; padding: 17px 6px 0 180px; align-items: center; }
    .r1 > .cb { margin-left: 14px; }
    .r1 > .allow { margin-left: 24px; }
    .r2 { display: grid; grid-template-columns: 174px 97px 364px 152px 99px; padding: 9px 6px 0 332px; align-items: center; }
    .spin { display: flex; justify-content: flex-end; gap: 2px; height: 27px; margin-left: 6px; border-bottom: 1px solid #2c3342; }
    .ud { width: 15px; height: 26px; background-color: #565656; color: #161616; font: 8px/13px "DejaVu Sans", sans-serif; text-align: center; }
    .cb { width: 16px; height: 17px; border: 2px solid #3a3f49; background-color: #0c0c0e; padding: 2px; background-clip: content-box; }
    .cb.off { border: 1px solid #23262b; }
    .cb.on { background-color: #6a4a0a; }
    .c1 { display: grid; grid-template-columns: 18px 221px 328px 50px 352px 183px 11px 50px; padding: 7px 0 0 23px; align-items: center; }
    .c1 > .t:nth-child(2) { margin-left: 6px; }
    .c2 { display: grid; grid-template-columns: 24px 394px 23px 386px 23px 136px; padding: 2px 0 0 23px; align-items: center; height: 26px; }
    .c2 .dim { color: #303030; }
    .c3 { display: grid; grid-template-columns: 952px 110px 110px; column-gap: 12px; padding: 7px 0 0 10px; }
    .c3 > :nth-child(2), .c3 > :nth-child(3) { margin-left: 7px; margin-right: -7px; }
    .bar { display: flex; height: 30px; border: 1px solid #1c2330; background: #0b0e13; position: relative; }
    .fill { background: linear-gradient(90deg, transparent 60%, rgba(120, 105, 70, 0.5)), linear-gradient(#58492c, #5c430d 55%, #5a3c00); }
    .bartext { position: absolute; left: 412px; top: 4px; color: #15120b; }

    .cap { position: absolute; top: 1075px; left: 938px; width: 1773px; mix-blend-mode: screen; }
    .cap.two { top: 1517px; left: 1101px; width: 1446px; }
  `;

  menus() {
    return html`<i class="drop left"></i>
      <div class="row">
        ${label('Tripod', 49)}${label('Image', 49)}${label('Color', 42)}${label('Grid', 32)}${label('Pivot', 39)}
      </div>`;
  }

  navButtons() {
    return html`
      <div class="vbtn">${icon('zoom', 20)}${label('Zoom', 45)}</div>
      <div class="vbtn pan">${icon('hand', 20)}${label('Pan', 27)}</div>
      <div class="vbtn fit">${icon('fit', 22)}${label('Fit', 18)}</div>
      <div class="vbtn max">${icon('max', 19)}</div>`;
  }

  viewHead(name: string, width: number, icons: string[]) {
    return html`
      <div class="vhead">
        <div class="name">${label(name, width, 17, 700)}</div>
        ${this.menus()}
        <div class="vicons">${icons.map(i => icon(i, 23, 20))}<i class="drop"></i></div>
        ${this.navButtons()}
      </div>`;
  }

  toolbar() {
    return html`
      <div class="toolbar">
        <div class="group menus">
          ${label('File', 26)}${label('View', 37)}${label('Edit', 30)}${icon('exit', 24)}${icon('help', 25)}
        </div>
        <div class="group tools">
          ${MAIN_ICONS.map(([n, w]) => html`<div class="tool" style=${styleMap({width: `${w}px`})}>
            ${n === 'drop' ? html`<i class="drop"></i>` : icon(n, 22, 24)}</div>`)}
          <div class="more"><i class="drop"></i></div>
        </div>
        <div class="group axes">
          <div class="wsel">${label('W...', 27)}<span>⌄</span></div>
          <div class="gold">${icon('axisX', 24, 30)}</div>${icon('axisY', 22, 26)}${icon('axisZ', 24, 26)}
          <div class="more"><i class="drop"></i></div>
        </div>
        <div class="group verts">
          ${icon('vert', 24)}${label('Vertex', 48)}${icon('vertR', 26)}${icon('vertW', 26)}
          <div class="gold">${icon('vertA', 26, 30)}</div>${icon('vertS', 24)}
          <div class="more"><i class="drop"></i></div>
        </div>
        <div class="group prims">${['disc', 'cone', 'cube', 'cylinder'].map(n => icon(n, 24))}</div>
      </div>`;
  }

  commands() {
    return html`
      <div class="commands">
        <div class="strip">
          <div class="mini">${icon('x', 14)}</div>
          <div class="mini">${icon('pin', 14)}</div>
          <div class="vtext">Commands Ba</div>
        </div>
        <div class="cmdbody">
          <div class="cmdtop">
            <div class="bind l">
              ${label('Left button:', 90)}<i class="drop"></i>
              <div class="gold">${icon('move', 25)}${label('Move', 43)}</div>
            </div>
            ${TABS.map(([n, w, t]) => html`<div
              class=${classMap({tab: true, on: n === 'Modify'})}
              style=${styleMap({width: `${w}px`})}
            >${label(n, t)}</div>`)}
            <div class="bind r">
              <div class="gold">${icon('extrude', 24)}${label('Quadr', 49)}</div>
              <i class="drop"></i>${label(':Right button', 103)}
            </div>
          </div>
          <div class="ribbon">
            ${COMMANDS.map(([n, i, w, t, c]) => html`
              <div class=${classMap({cmd: true, gold: n === 'Move'})} style=${styleMap({width: `${w}px`})}>
                ${icon(i, 42, 40)}${label(n, t)}${c ? html`<i class="corner"></i>` : ''}
              </div>`)}
            <div class="submesh">
              <div class="subhead"><i class="drop up"></i>${label('Submesh...', 82)}</div>
              <div class="subicons">
                ${SUBMESH.map(([n, c]) => html`<div class="sub">${icon(n, 40)}${c ? html`<i class="corner"></i>` : ''}</div>`)}
              </div>
            </div>
          </div>
        </div>
      </div>`;
  }

  axis(x: number, y: number) {
    return svg`<rect x=${x} y=${y} width="17" height="18" fill="#5f1c14" /><path d="M${x + 4} ${y + 3}l9 12m0-12l-9 12" stroke="#8a7370" />`;
  }

  trailer() {
    const ribs: [number, number, number][] = [[436, 612, 722], [448, 609, 735], [466, 609, 750], [482, 611, 766], [499, 614, 783], [520, 620, 806], [546, 628, 833], [578, 640, 868]];
    return html`
      <svg class="canvas" width="1168" height="748" viewBox="74 280 1168 748">
        <path d="M74 908L566 854M841 821L1242 777" stroke="#26344b" />
        <path d="M630 914L739 1028" stroke="#262626" />
        <path d="M428 612L446 608L520 607L595 608L650 612L720 622L835 643L620 655L560 628Z" fill="#0a0a08" />
        <path d="M428 612L440 609L500 613L548 626L612 650L616 918L566 856L500 785L468 752L428 716Z" fill="#191912" />
        ${ribs.map(([x, y0, y1], i) => svg`<path d="M${x} ${y0}V${y1 - 6}" stroke=${i % 2 ? '#484848' : '#2b2b22'} stroke-width=${i % 2 ? 1.5 : 1} />`)}
        <path d="M430 710L450 728M462 738L478 752M488 760L500 770M510 778L520 790M533 803L541 812M555 825L562 833M572 840L578 850M586 860L610 886" fill="none" stroke="#050505" stroke-width="4" />
        <path d="M428 716L468 752L500 785L566 856L620 922" fill="none" stroke="#0a0a0a" stroke-width="2" />
        <path d="M519 607H592" fill="none" stroke="#0a0a0a" stroke-width="3" />
        <path d="M611 655Q612 648 620 647L838 643L841 648L840 882L836 884V651L625 657V911L613 908Z" fill="#525256" />
        <path d="M618 657V910M614 652L832 644" fill="none" stroke="#2b2b3c" />
        <path d="M625 657L838 650L836 882L625 911Z" fill="#434330" />
        <path d="M625 913L838 884" stroke="#060606" stroke-width="4" />
        <path d="M617 906L626 914V924H620ZM829 886H838V891L835 894L830 892Z" fill="#070707" />
        <path d="M561 850L571 858M571 850L561 858M566 846V862" stroke="#5a1738" stroke-width="2" />
        <path d="M144 962V1006" stroke="#0f4a14" /><path d="M104 1007L144 1006" stroke="#4a1414" /><path d="M144 1006L160 1009" stroke="#15306a" />
        ${this.axis(82, 1000)}
        <path d="M139 943L144 949L149 943M144 949V955" fill="none" stroke="#0f5414" stroke-width="1.500" />
        <path d="M160 1006H169L160 1017H169" fill="none" stroke="#14306a" stroke-width="1.500" />
      </svg>`;
  }

  closeTrailer() {
    const ribs = ['M500 1267L785 1288Q794 1290 794 1305L780 1640', 'M590 1246L840 1256Q853 1258 853 1270L833 1545',
      'M667 1231L885 1240Q894 1243 894 1250L875 1495', 'M717 1220L915 1226Q922 1230 922 1238L903 1450',
      'M770 1212L938 1219L930 1400', 'M810 1208L953 1213L948 1380'];
    return html`
      <svg class="canvas" width="1168" height="674" viewBox="74 1065 1168 674">
        <path d="M74 1371L370 1431M852 1530L1212 1603" stroke="#26304a" stroke-width="1.500" />
        <path d="M366 1304L385 1295L500 1267L590 1246L717 1220L850 1203L999 1207L722 1345Z" fill="#171711" />
        <path d="M722 1340L850 1250L940 1213L999 1207L990 1330L960 1372L935 1410L717 1739H714Z" fill="#1f1d15" />
        <path d="M800 1292L845 1262L835 1500L785 1620ZM856 1260L890 1243L872 1480L838 1540ZM940 1219L998 1209L988 1325L940 1395Z" fill="#29271c" />
        ${ribs.map((d, i) => svg`<path d=${d} fill="none" stroke="#070707" stroke-width=${i > 1 ? 2.5 : i ? 6 : 4} />`)}
        <path d="M722 1336L845 1250M716 1330L835 1248M725 1342L850 1256M728 1330L852 1250M850 1250L940 1214M855 1256L940 1218" stroke="#060606" stroke-width="1" />
        <path d="M415 1295L560 1256M540 1268L835 1259M670 1321L840 1260M430 1296L790 1289M650 1232L885 1241" stroke="#080808" stroke-dasharray="22 8" />
        <path d="M726 1360L780 1615M794 1300L832 1520M725 1348L717 1739M730 1690L835 1530L905 1440L960 1370M962 1215L955 1372M975 1213L968 1360M988 1211L980 1344" fill="none" stroke="#080808" stroke-width="1.500" />
        <path d="M717 1710L780 1600L835 1520L940 1390" fill="none" stroke="#060606" stroke-width="4" />
        <path d="M388 1296L500 1267L590 1246L717 1220L850 1203L999 1207" fill="none" stroke="#080808" stroke-width="3" stroke-dasharray="20 3" />
        <path d="M366 1313L690 1351V1739H645L400 1651Z" fill="#3f3e2c" />
        <path d="M360 1308Q362 1301 370 1302L388 1296L708 1327Q722 1330 722 1345L714 1739H690V1352L366 1315L400 1651L396 1652Z" fill="#4e4e52" />
        <path d="M372 1304L692 1342M380 1300L700 1334M385 1298L706 1330M366 1314L690 1352M376 1302L696 1338" stroke="#070707" stroke-width="1.800" />
        <path d="M691 1348V1739M698 1338L696 1739M703 1335V1739M708 1335L706 1739M714 1335L710 1739M722 1345L715 1739" stroke="#060606" stroke-width="2.500" />
        <path d="M360 1306L396 1652M366 1318L400 1650M368 1318L676 1739" stroke="#070707" stroke-width="1.500" />
        <path d="M399 1653L648 1742" fill="none" stroke="#060606" stroke-width="5" />
        <path d="M393 1648H402L409 1656L402 1662H394Z" fill="#060606" />
        <path d="M1001 1280L1018 1268" stroke="#262626" />
        <path d="M743 1508L811 1522" stroke="#5a1111" stroke-width="1.500" /><path d="M811 1522L788 1550" stroke="#14143a" stroke-width="1.500" /><path d="M813 1475V1518" stroke="#0f3312" />
        <path d="M807 1517H816V1527H807Z" fill="#3e1430" />
      </svg>`;
  }

  uvMapper() {
    return html`
      <div class="mapper">
        <div class="mapside">
          ${MAPPER.map(([n, i, w]) => html`<div class="mapbtn">${icon(i, 32, 30)}<div class="grow">${label(n, w)}</div></div>`)}
        </div>
        <svg class="canvas uv" width="1774" height="645" viewBox="1410 1065 1774 645">
          <path d="M1410 1065H3184V1710H1410Z" fill="#555557" />
          <path d="M2150 1140H2603V1591H2150Z" fill="#48484a" />
          <path d="M2148 1134H2599V1585H2148Z" fill="#5a090c" />
          ${uvStrip(2157, 1150, 395, 71, 5, '#5a090c', '#0d1f07', 1.8)}
          ${uvStrip(2157, 1229, 395, 71, 5, '#5f2629', '#0d1f07', 1.8)}
          ${uvStrip(2157, 1317, 395, 69, 0, '#5a090c', '#0d1f07', 1.8)}
          <path d="M2483 1440H2593V1578H2483Z" fill="#5d2427" stroke="#0d1f07" />
          <path d="M2485 1578L2593 1460" stroke="#0d1f07" stroke-dasharray="60 70" />
          <path d="M1410 1134H3184M2148 1065V1710" stroke="#2c3848" stroke-width="1.500" />
          <path d="M2142 1128L2155 1141M2155 1128L2142 1141M2143 1134H2154" stroke="#3d0d26" stroke-width="3" />
          <path d="M1424 1683V1651" stroke="#0f4d14" stroke-width="1.500" /><path d="M1423 1651H1440" stroke="#5a1414" />
          <path d="M1418 1693L1421 1698L1425 1693M1421 1698V1703" fill="none" stroke="#0f4d14" stroke-width="1.500" />
        </svg>
        <div class="mapfoot">
          <i class="drop up"></i><span class="bold">Options</span><i class="drop up"></i>${label('Background', 84)}
          <i class="swatchk"></i>${label('Mesh', 40)}
        </div>
      </div>`;
  }

  props() {
    return html`
      <div class="ptable">
        <div class="phead">${label('Property', 65)}<div>${label('Value', 42)}</div></div>
        ${PROPS.map(([n, v, kind, depth, nw, vw]) => {
          const bold = ['group', 'plus', 'minus', 'bold'].includes(kind);
          return html`
            <div class=${classMap({
              prow: true,
              sect: kind === 'group',
              line: n === 'Transformation' || n === 'Mesh',
              edge: kind === 'minus' || kind === 'last' || kind === 'check',
            })}>
              <div class=${classMap({pcell: true, i2: depth === 2, leaf1: kind === '' && depth === 1})}>
                ${['group', 'plus', 'minus', 'check'].includes(kind)
                  ? html`<i class="plus">${kind === 'plus' ? '+' : kind === 'check' ? '' : '−'}</i>` : ''}
                ${label(n, nw, 17, bold ? 700 : 400)}
              </div>
              <div class="pval">${v ? label(v, vw) : ''}${kind === 'last' ? html`<i>▾</i>` : ''}</div>
            </div>`;
        })}
      </div>`;
  }

  rightPane() {
    return html`
      <div class="right">
        <div class="rhead">
          ${label('Scene nodes browser', 161)}
          <div class="mini">${icon('pin', 14)}</div><div class="mini">${icon('x', 14)}</div>
        </div>
        <div class="rtabs">
          <div class="rtab">${label('Hierarchy', 72)}</div>
          <div class="rtab">${label('Structure', 69)}</div>
          <div class="rtab on">${label('Properties', 76)}</div>
        </div>
        <div class="rbox">
          ${this.props()}
          <div class="hscroll"><b>❮</b><b>❯</b></div>
          <div class="apply">${label('Apply', 43)}</div>
        </div>
        <div class="splitter"></div>
        <div class="tree">
          ${TREE.map(([n, w, d, exp, color, state]) => html`
            <div class="trow d${d} ${state}">
              ${exp ? html`<i class="plus">${exp}</i>` : ''}
              <i class="box" style=${styleMap({backgroundColor: color})}></i>
              ${label(n, w, 17, state === 'bold' ? 700 : 400)}
            </div>`)}
        </div>
        <div class="rfoot">
          ${icon('isolate', 26)}${label('Isolated', 59)}${icon('show', 22)}${label('Show All', 65)}
          ${icon('hide', 22)}${label('Hide All', 59)}${icon('listUp', 22)}${label('Move Up', 69)}
          <div class="tail">${['listDn', 'listIn', 'listPl', 'listMi'].map(n => icon(n, 24))}</div>
        </div>
      </div>`;
  }

  bottom() {
    return html`
      <div class="bottom">
        <div class="transport">
          <div class="player">
            <div class="pb">|◀</div><div class="pb big">${label('Play', 34, 17, 700)}</div><div class="pb">▶|</div>
            <div class="pb back">◂◂</div><div class="pb slow">◂</div>
            <div class="pb rate">1x</div><div class="pb fast">▸</div>
            <div class="pb fwd">▸▸</div>
          </div>
          <div class="keys">
            <div class="combo2"></div>
            <div class="key">${icon('page', 26)}</div><div class="key">${icon('keyAdd', 24)}</div><div class="key">${icon('keyOk', 24)}</div>
          </div>
          <svg class="timeline" width="858" height="82" viewBox="394 1990 858 82">
            <path d="M394 1993H1252V2040H394Z" fill="#121212" />
            <path d="M394 2042H1252V2068H394Z" fill="#1b1b1b" />
            <path d="M394 1998H1252M394 2041H1252" stroke="#050505" stroke-width="2" />
            <path d="M403 1998V2038" stroke="#2a2a2a" />
            ${range(120).map(i => svg`<path d="M${410 + i * 7} 1998V2003" stroke="#2c2c2c" />`)}
            ${[0, 24, 48, 72, 96, 12].map((n, i) => svg`
              <path d="M${403 + i * 168} 1998V2014" stroke="#333" stroke-width="1.500" />
              <text x=${i ? 403 + i * 168 - (i === 5 ? 5 : 0) : 410} y="2027" text-anchor="middle" fill="#2f2f2f" font-size="17">${n}</text>`)}
          </svg>
        </div>
        <div class="status">
          ${label('Hold down SHIFT key to constrain tool to vertical or horizontal movement only.', 617)}
          <div class="sbtn sel">${label('Selected', 67, 17, 700)}</div>
          <div class="sbtn auto">${label('Auto', 38, 17, 700)}</div>
          <div class="sbtn piv"><i class="red"></i>${label('Pivot', 41, 17, 700)}</div>
          <div class="sbtn arr">⬇</div>
          <div class="cur">${label('Cursor: -9.12000, 0.00000, -2.99000', 265)}</div>
        </div>
      </div>`;
  }

  spin(value: string, width: number) {
    return html`<div class="spin">${label(value, width)}<div class="ud">▲<br>▼</div></div>`;
  }

  dialog() {
    return html`
      <div class="dialog">
        <div class="band"></div>
        <div class="dbody">
          <div class="dtitle">
            ${icon('ruv', 22)}${label('Render UV', 83)}
            <svg class="icon winbtns" width="158" height="20" viewBox="0 0 158 20" fill="none" stroke="#080808">
              <path d="M1 9H16M140 2L155 17M155 2L140 17" stroke-width="1.500" /><path d="M70 2H84V16H70Z" stroke="#4d4d4d" />
            </svg>
          </div>
          <div class="dform">
            <div class="f1">${label('Render type:', 91)}<div class="sel">${label('Wireframe UV Atlas', 139)}<span>⌄</span></div></div>
            <div class="f2">
              ${label('Output image width:', 146)}<div class="sel">${label('4096', 37)}<span>⌄</span></div><i></i>
              ${label('height:', 50)}<div class="sel">${label('4096', 37)}<span>⌄</span></div><i></i>
              <div class="dbtn off">${label('Save...', 48)}</div>
            </div>
          </div>
          <div class="stage">
            <svg width="1219" height="660" viewBox="1352 133 1219 660">
              <path d="M1695 192H2228V725H1695Z" fill="#0a0a0a" stroke="#141a2c" />
              ${uvStrip(1706, 212, 464, 84, 5, '#656565', '#141414')}
              ${uvStrip(1706, 305, 464, 84, 5, '#656565', '#141414')}
              ${uvStrip(1707, 408, 464, 83, 0, '#656565', '#141414')}
              <path d="M2090 592H2219V622H2090ZM2090 630H2219V651H2090ZM2090 658H2219V690H2090ZM2090 692H2219V694H2090ZM2090 696H2219V717H2090Z" fill="#656565" />
              <path d="M2202 595L2180 621M2169 632L2153 651M2141 662L2120 688M2110 696L2091 717" stroke="#141414" stroke-width="0.700" stroke-dasharray="10 8" />
            </svg>
            <div class="vscroll"><i>▲</i><i>↕</i><i>▼</i></div>
          </div>
          <div class="dscroll"><i>◀</i><i>◂▸</i><i>▶</i></div>
          <div class="under">
            ${label('Underlayer texture:', 136)}<div class="dbtn">...</div><div class="dbtn">${icon('cross', 12, 14)}</div><div class="sw"></div>
          </div>
          <div class="rays">
            <div class="legend">${label('Ray tracer settings:', 135)}</div>
            <div class="r1">
              ${label('Rays emitted:', 96)}${this.spin('512', 27)}
              <i class="cb off"></i>
              <span class="allow">${label('Allow reflections', 116)}</span><i></i>
              ${label('Emission distance:', 130)}${this.spin('1.00', 32)}
            </div>
            <div class="r2">
              ${label('Shadow midpoint range:', 174)}${this.spin('0.010', 41)}<i></i>
              ${label('Shading falloff range:', 152)}${this.spin('0.010', 41)}
            </div>
          </div>
          <div class="c1">
            <i class="cb on"></i>${label('Override Light color / intensity:', 221)}<i></i><div class="sw"></div><i></i>
            ${label('Shadows color / intensity:', 183)}<i></i><div class="sw dark"></div>
          </div>
          <div class="c2">
            <i class="cb on"></i>${label('Multisampling antialiasing', 182)}
            <i class="cb off"></i><span class="dim">${label('Noise removal filter', 138)}</span>
            <i class="cb"></i>${label('Border connectivity', 136)}
          </div>
          <div class="c3">
            <div class="bar"><div class="fill" style=${styleMap({width: '88%'})}></div><div class="bartext">${label('Rendering... 88%', 127)}</div></div>
            <div class="dbtn off">${label('Render', 51)}</div><div class="dbtn">${label('Cancel', 46)}</div>
          </div>
        </div>
      </div>`;
  }

  render() {
    const small = ['face', 'edge', 'spray', 'checker', 'clap', 'bulb'];
    const full = ['wire', 'wire', 'face', 'purple', 'edge', 'heat', 'spray', 'checker', 'clap', 'bulb'];
    return html`
      <div class="titlebar">
        <svg class="icon logo" width="18" height="24" viewBox="0 0 18 24">
          <path d="M2 1H16L17 12H1Z" fill="#611717" /><path d="M1 12H17L15 23H3Z" fill="#12275c" />
          <path d="M5 6H13L5 18H13" fill="none" stroke="#777" stroke-width="3" />
        </svg>
        ${label('ZModeler 64 bit version 3.2.1 (Build 1194)', 331)}
        <svg class="icon winbtns" width="156" height="18" viewBox="0 0 156 18" fill="none" stroke="#0a0a0a" stroke-width="1.500">
          <path d="M1 10H16M140 2L154 17M154 2L140 17" /><path d="M70 6H81V17H70ZM73 6V2H85V14H81" />
        </svg>
      </div>
      ${this.toolbar()}
      <div class="main">
        <div class="side"><div class="sidebtn"><div>${icon('redo', 20)}</div><div><i class="play"></i></div></div></div>
        <div class="center">
          ${this.commands()}
          <div class="views">
            <div class="vp">${this.viewHead('3D', 23, small)}${this.trailer()}</div>
            <div class="vp">
              ${this.viewHead('Top', 31, ['wire', 'purple', 'edge', 'heat', 'spray', 'clap'])}
              <div class="gridbg">
                <svg width="120" height="748" viewBox="1250 280 120 748">
                  <path d="M1265 952V1009" stroke="#15306a" /><path d="M1265 1009H1324" stroke="#5a1414" stroke-width="1.500" />
                  <path d="M1261 931H1270L1261 942H1270" fill="none" stroke="#14306a" stroke-width="1.500" />
                  <path d="M1260 1004L1265 1010L1270 1004M1265 1010V1016" fill="none" stroke="#0f5414" stroke-width="1.500" />
                  ${this.axis(1332, 1002)}
                </svg>
              </div>
            </div>
            <div class="vp low">${this.viewHead('Perspective', 98, full)}${this.closeTrailer()}</div>
            <div class="vp low">
              <div class="vhead"><div class="name">${label('UV Mapper', 96, 17, 700)}</div>
                <div class="vicons"><i class="drop"></i></div>
                ${this.navButtons()}
              </div>
              ${this.uvMapper()}
            </div>
          </div>
          <div class="messages">
            <div class="strip">
              <div class="mini">${icon('x', 14)}</div>
              <div class="mini">${icon('pin', 14)}</div>
              <div class="vtext">Messaging Bar</div>
            </div>
            <div class="list">
              <div class="msg first"><i class="plus">+</i><i class="dot err">×</i>
                ${label('Failed to locate texture "C:\\Users\\Dro\\Desktop\\Dro Modding\\ATS\\WIP\\Raven Flatbed/material/environment/vehicle_reflection.dds".', 1038)}
              </div>
              <div class="msg"><i class="dot">i</i>${label('Performing autosave to "c:\\users\\dro\\appdata\\local\\temp\\rar$exa10732.12655/autosave.z3d"', 743)}</div>
              <div class="msg hot"><i class="dot">i</i>${label('Performing autosave to "c:\\users\\dro\\appdata\\local\\temp\\rar$exa10732.12655/autosave.z3d"', 743)}</div>
            </div>
          </div>
        </div>
        ${this.rightPane()}
      </div>
      ${this.bottom()}
      <div class="task">
        ${icon('ball', 24, 26)}
        <svg width="170" height="20" viewBox="0 0 170 20" fill="none" stroke="#0a0a0a" stroke-width="1.500">
          <path d="M1 5H9V18H1ZM4 5V2H12V15H9M69 2H83V17H69ZM140 2L154 17M154 2L140 17" />
        </svg>
      </div>
      ${this.dialog()}
      <zm-caption class="cap" .glyphs=${LINE1} .seams=${[567, 937, 1238, 1550, 1690]}></zm-caption>
      <zm-caption class="cap two" .glyphs=${LINE2} .seams=${[374, 513, 733, 880, 1170]}></zm-caption>
    `;
  }
}
